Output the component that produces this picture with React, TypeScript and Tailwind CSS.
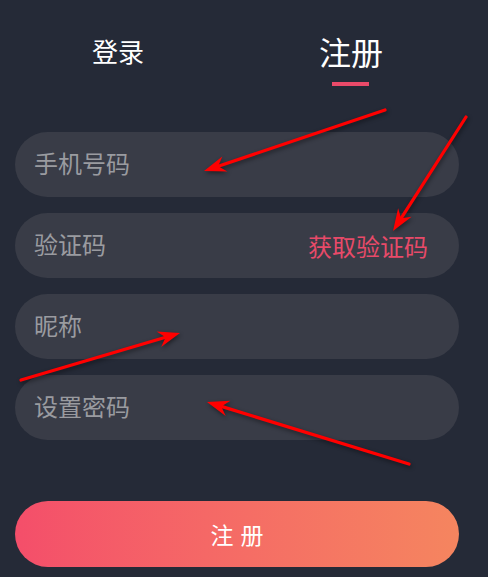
import React from "react";

type Arrow = { x1: number; y1: number; x2: number; y2: number };

const arrows: Arrow[] = [
  { x1: 385, y1: 110, x2: 204, y2: 171 },
  { x1: 466, y1: 117, x2: 393, y2: 231 },
  { x1: 21, y1: 380, x2: 180, y2: 333 },
  { x1: 409, y1: 464, x2: 207, y2: 402 },
];

function ArrowShape({ a }: { a: Arrow }) {
  const dx = a.x2 - a.x1;
  const dy = a.y2 - a.y1;
  const len = Math.hypot(dx, dy);
  const ux = dx / len;
  const uy = dy / len;
  const nx = -uy;
  const ny = ux;
  const headLen = 22;
  const half = 8;
  const notch = 15;
  const bx = a.x2 - ux * headLen;
  const by = a.y2 - uy * headLen;
  const w1 = `${bx + nx * half},${by + ny * half}`;
  const w2 = `${bx - nx * half},${by - ny * half}`;
  const nX = a.x2 - ux * notch;
  const nY = a.y2 - uy * notch;
  return (
    <g>
      <line x1={a.x1} y1={a.y1} x2={nX} y2={nY} stroke="#ff0000" strokeWidth={3.2} strokeLinecap="round" />
      <polygon points={`${a.x2},${a.y2} ${w1} ${nX},${nY} ${w2}`} fill="#ff0000" />
    </g>
  );
}

function Field({ label, right }: { label: string; right?: string }) {
  return (
    <div className="flex h-[65px] items-center justify-between rounded-full bg-[#393c47] pl-[19px] pr-[31px]">
      <span className="-mt-[3px] text-[24px] leading-none text-[#9a9ba0]">{label}</span>
      {right && <span className="mt-[1px] text-[24px] leading-none text-[#e84a69]">{right}</span>}
    </div>
  );
}

export default function App() {
  return (
    <div
      className="relative h-[577px] w-[488px] overflow-hidden bg-[#252a37]"
      style={{ fontFamily: '"Noto Sans CJK SC", "Noto Sans", sans-serif' }}
    >
      <div className="mt-[35px] flex h-[32px] items-center">
        <div className="w-[236px] text-center text-[26px] leading-none text-white">登录</div>
        <div className="w-[230px] text-center text-[32px] leading-none text-white">注册</div>
      </div>
      <div className="flex">
        <div className="ml-[332px] mt-[15px] h-[4px] w-[37px] bg-[#ea4a69]" />
      </div>
      <div className="ml-[15px] mt-[46px] flex w-[444px] flex-col gap-[16px]">
        <Field label="手机号码" />
        <Field label="验证码" right="获取验证码" />
        <Field label="昵称" />
        <Field label="设置密码" />
      </div>
      <div className="ml-[15px] mt-[61px] flex h-[66px] w-[444px] items-center justify-center gap-[7px] rounded-full bg-linear-to-r from-[#f44e6a] to-[#f5855f] text-[23px] leading-none text-white">
        <span>注</span>
        <span>册</span>
      </div>
      <svg
        className="pointer-events-none absolute left-0 top-0 drop-shadow-[1px_2px_2px_rgba(0,0,0,0.45)]"
        width={488}
        height={577}
        viewBox="0 0 488 577"
      >
        {arrows.map((a, i) => (
          <ArrowShape key={i} a={a} />
        ))}
      </svg>
    </div>
  );
}
